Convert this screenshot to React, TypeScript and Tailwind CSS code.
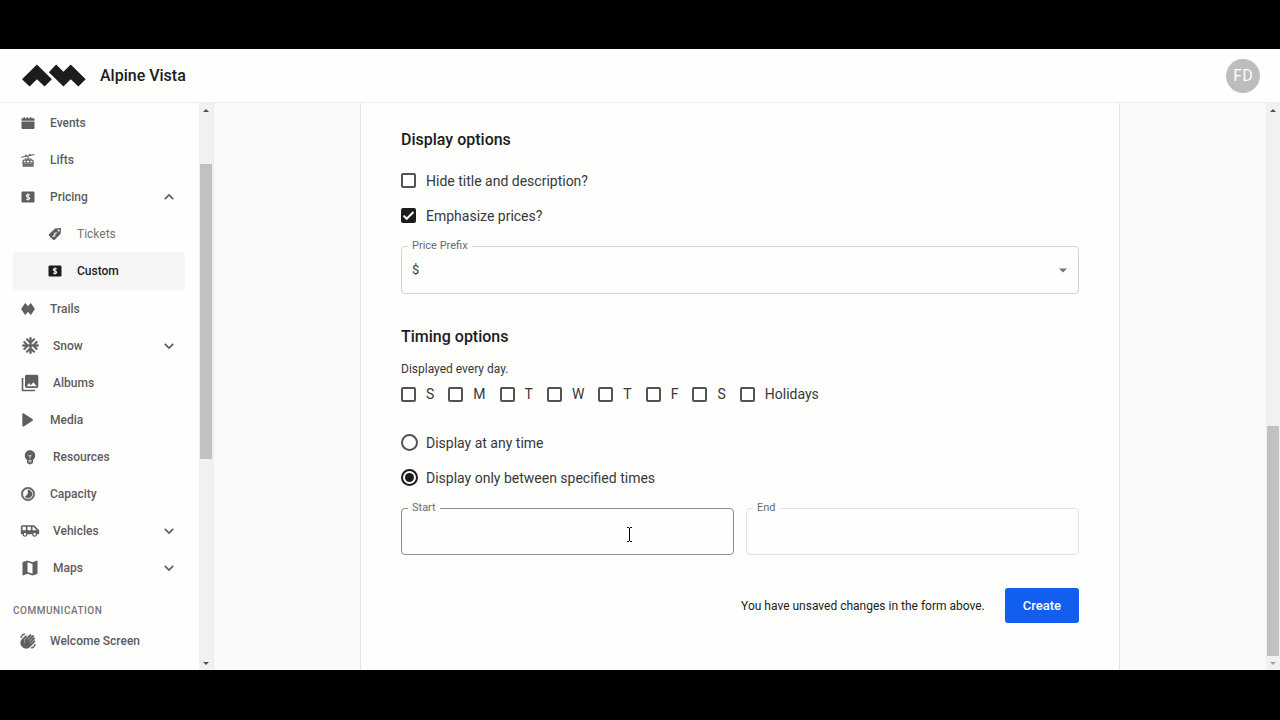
import { useState, type ReactNode } from "react";
import {
  MdAcUnit,
  MdAirportShuttle,
  MdEmojiObjects,
  MdMap,
  MdPhotoLibrary,
  MdTimelapse,
  MdWavingHand,
} from "react-icons/md";

function Logo() {
  return (
    <svg viewBox="65 73 193 68" className="h-[23px] w-16 shrink-0 fill-[#1b1c1e]" aria-hidden="true">
      <path d="M65 118 110 74 155 118 133 140 110 118 88 140Z" />
      <path d="M146 97 168 74 190 96 212 74 257 118 235 140 212 118 190 140Z" />
    </svg>
  );
}

function CalendarIcon() {
  return (
    <svg viewBox="0 0 14 14" className="size-[14px] fill-current">
      <path d="M.5 4.700V3.200a1 1 0 0 1 1-1h1V1.200h1.600v1h1.500v-1h1.600v1h1.600v-1h1.600v1h2.100a1 1 0 0 1 1 1v1.500ZM.5 5.500h13v6.500a1 1 0 0 1-1 1h-11a1 1 0 0 1-1-1Z" />
    </svg>
  );
}

function GondolaIcon() {
  return (
    <svg viewBox="0 0 14 14" className="size-[14px]" fill="none" stroke="currentColor">
      <path d="M.3 4.300 13.500 1.500M7.100 3v3.500" strokeWidth="1" />
      <circle cx="5" cy="2.500" r="0.900" fill="currentColor" stroke="none" />
      <circle cx="9" cy="1.600" r="0.900" fill="currentColor" stroke="none" />
      <path d="M3.500 6.200h7.200M1.400 9.900h11.400" strokeWidth="1.200" />
      <path d="M2.200 7.300h9.800v5.800H2.200ZM5.300 7.300v2.800M8.900 7.300v2.800" strokeWidth="1.100" />
      <path d="M2.200 11.700h9.800" strokeWidth="2" />
    </svg>
  );
}

function PriceIcon() {
  return (
    <svg viewBox="0 0 14 14" className="size-[14px]" fill="none">
      <rect x="0.500" y="1.500" width="13" height="11" rx="1.200" fill="currentColor" />
      <path
        d="M8.700 5.300C8.400 4.700 7.800 4.500 7 4.500c-1 0-1.700.4-1.700 1.200C5.300 7.400 8.700 6.600 8.700 8.300c0 .8-.7 1.200-1.700 1.200-.8 0-1.500-.3-1.700-.9M7 3.400v7.200"
        stroke="#fefefd"
        strokeWidth="1.100"
      />
    </svg>
  );
}

function TagIcon() {
  return (
    <svg viewBox="0 0 14 14" className="size-[14px]" fill="none">
      <path
        d="M7.400 1.600 12 .9c.7-.1 1.200.4 1.100 1.100l-.5 4.300a2 2 0 0 1-.6 1.200l-5 5.100a1.500 1.500 0 0 1-2.100 0L1.200 9a1.500 1.500 0 0 1 0-2.100l5-4.700a2 2 0 0 1 1.200-.6Z"
        fill="currentColor"
      />
      <circle cx="10.700" cy="3.400" r="1" fill="#fefefd" />
      <path
        d="M8.300 6.200c-.7-.5-1.400-.3-1.800.2-.9 1.200 1.200 1.600.3 2.700-.5.600-1.200.6-1.900 0M8.800 5.300 4.500 9.900"
        stroke="#fefefd"
        strokeWidth="0.900"
      />
    </svg>
  );
}

function TrailsIcon() {
  return (
    <svg viewBox="0 0 14 14" className="size-[14px] fill-current">
      <path d="M3.800 1.600c.3-.4.700-.4 1 0L7 4.300l2.200-2.700c.3-.4.700-.4 1 0l3.400 4.900c.2.300.2.700 0 1l-3.400 4.900c-.3.400-.7.400-1 0L7 9.700l-2.200 2.700c-.3.400-.7.400-1 0L.4 7.500a.9.900 0 0 1 0-1Z" />
    </svg>
  );
}

function PlayIcon() {
  return (
    <svg viewBox="0 0 14 14" className="size-[14px] fill-current">
      <path d="M1.300 1.300C1.300.4 2 0 2.800.5l8.700 5.600c.6.400.6 1.200 0 1.600l-8.700 5.700c-.8.500-1.500.1-1.500-.8Z" />
    </svg>
  );
}

function Chevron({ up = false }: { up?: boolean }) {
  return (
    <svg viewBox="0 0 12 12" className="size-3 shrink-0" fill="none" stroke="currentColor" strokeWidth="1.700">
      <path d={up ? "M1.800 8.200 6 4l4.200 4.200" : "M1.800 3.800 6 8l4.200-4.200"} />
    </svg>
  );
}

type NavItem = {
  label: string;
  icon: ReactNode;
  wide?: boolean;
  child?: boolean;
  active?: boolean;
  toggle?: "up" | "down";
};

// The icon set ships an invisible bounding path; it is hidden so that only the glyph gets the heavier stroke.
const boldIcon = "stroke-current stroke-[0.8] [&>path[fill=none]]:hidden";

const navItems: NavItem[] = [
  { label: "Events", icon: <CalendarIcon /> },
  { label: "Lifts", icon: <GondolaIcon /> },
  { label: "Pricing", icon: <PriceIcon />, toggle: "up" },
  { label: "Tickets", icon: <TagIcon />, child: true },
  { label: "Custom", icon: <PriceIcon />, child: true, active: true },
  { label: "Trails", icon: <TrailsIcon /> },
  { label: "Snow", icon: <MdAcUnit size={19} className={boldIcon} />, wide: true, toggle: "down" },
  { label: "Albums", icon: <MdPhotoLibrary size={20} />, wide: true },
  { label: "Media", icon: <PlayIcon /> },
  { label: "Resources", icon: <MdEmojiObjects size={18} />, wide: true },
  { label: "Capacity", icon: <MdTimelapse size={16} className={boldIcon} /> },
  { label: "Vehicles", icon: <MdAirportShuttle size={20} />, wide: true, toggle: "down" },
  { label: "Maps", icon: <MdMap size={20} />, wide: true, toggle: "down" },
];

function NavRow({ item }: { item: NavItem }) {
  const tone = item.active
    ? "h-[38px] bg-[#f5f5f5] text-[#1b1c1e] font-medium"
    : item.child
      ? "h-[37px] text-[#757575] font-normal"
      : "h-[37px] text-[#5c5c5e] font-medium";
  const indent = item.child ? "pl-[35px]" : "pl-2";
  const slot = item.wide ? "w-8" : "w-[29px]";
  const iconBox = item.wide ? "w-[18px]" : "w-[14px]";
  const content = (
    <>
      <span className={`flex shrink-0 ${slot}`}>
        <span className={`flex items-center justify-center ${iconBox} ${item.active ? "" : "text-[#5f5f61]"}`}>
          <span className="shrink-0">{item.icon}</span>
        </span>
      </span>
      <span className="flex-1 text-left">{item.label}</span>
      {item.toggle && <Chevron up={item.toggle === "up"} />}
    </>
  );
  const cls = `flex w-full items-center rounded-[3px] pr-[10px] text-xs ${indent} ${tone}`;
  return (
    <li>
      {item.toggle ? (
        <button type="button" aria-expanded={item.toggle === "up"} className={cls}>
          {content}
        </button>
      ) : (
        <a href="#" aria-current={item.active ? "page" : undefined} className={cls}>
          {content}
        </a>
      )}
    </li>
  );
}

function Scrollbar({ before, thumb, after, endTone }: { before: string; thumb: string; after: string; endTone: string }) {
  return (
    <div aria-hidden="true" className="flex w-[14px] shrink-0 flex-col bg-[#f1f1f3] px-px">
      <div className="flex h-[14px] items-center justify-center">
        <svg viewBox="0 0 6 3" className="h-[3px] w-[6px] fill-[#505050]"><path d="M0 3 3 0l3 3Z" /></svg>
      </div>
      <div className={`basis-0 ${before}`} />
      <div className={`basis-0 bg-[#c1c1c2] ${thumb}`} />
      <div className={`basis-0 ${after}`} />
      <div className="flex h-[14px] items-center justify-center">
        <svg viewBox="0 0 6 3" className={`h-[3px] w-[6px] ${endTone}`}><path d="M0 0h6L3 3Z" /></svg>
      </div>
    </div>
  );
}

function Check({ label, defaultChecked = false }: { label: string; defaultChecked?: boolean }) {
  return (
    <label className="flex items-center gap-[10px] text-sm text-[#37383b]">
      <span className="grid shrink-0">
        <input
          type="checkbox"
          defaultChecked={defaultChecked}
          className="peer col-start-1 row-start-1 size-[15px] appearance-none rounded-[2px] border-2 border-[#535355] checked:border-[#1b1c1e] checked:bg-[#1b1c1e]"
        />
        <svg
          viewBox="0 0 15 15"
          className="pointer-events-none invisible col-start-1 row-start-1 size-[15px] peer-checked:visible"
          fill="none"
          stroke="#fefefd"
          strokeWidth="2"
        >
          <path d="m2.500 7.600 3.200 3.200 6.800-6.800" />
        </svg>
      </span>
      {label}
    </label>
  );
}

function Radio({ label, checked, onSelect }: { label: string; checked: boolean; onSelect: () => void }) {
  return (
    <label className="flex h-[35px] items-center gap-2 text-sm text-[#37383b]">
      <span className="grid shrink-0 place-items-center">
        <input
          type="radio"
          name="display-time"
          checked={checked}
          onChange={onSelect}
          className="peer col-start-1 row-start-1 size-[17px] appearance-none rounded-full border-2 border-[#535355] checked:border-[#1b1c1e]"
        />
        <span className="pointer-events-none invisible col-start-1 row-start-1 size-[9px] rounded-full bg-[#1b1c1e] peer-checked:visible" />
      </span>
      {label}
    </label>
  );
}

function Field({ id, label, children }: { id: string; label: string; children: ReactNode }) {
  return (
    <div className="relative">
      {children}
      <label htmlFor={id} className="absolute -top-[6px] left-[7px] bg-[#fefefd] px-1 text-[11px] leading-3 text-[#6a6b6e]">
        {label}
      </label>
    </div>
  );
}

const days = ["S", "M", "T", "W", "T", "F", "S", "Holidays"];

export default function App() {
  const [limited, setLimited] = useState(true);

  return (
    <div className="flex h-screen flex-col bg-black pt-[49px] pb-[50px] font-[Roboto,sans-serif]">
      <header className="flex h-[54px] shrink-0 items-center border-b border-[#f0f0f1] bg-[#fefefd] pr-5 pl-[22px]">
        <Logo />
        <span className="ml-[14px] flex-1 text-base font-medium text-[#1b1c1e]">Alpine Vista</span>
        <button
          type="button"
          aria-label="Account"
          className="flex size-[34px] items-center justify-center rounded-full bg-[#bdbdbd] text-base text-[#fefefd]"
        >
          FD
        </button>
      </header>

      <div className="flex min-h-0 flex-1">
        <aside className="flex w-[214px] shrink-0 border-r border-[#ececee] bg-[#fefefd]">
          <nav className="flex-1 overflow-hidden pt-px pr-[14px] pl-[13px]">
            <ul>
              {navItems.map((item) => (
                <NavRow key={item.label} item={item} />
              ))}
            </ul>
            <h2 className="mt-[15px] text-[10px] leading-5 font-medium tracking-wider text-[#757577]">COMMUNICATION</h2>
            <ul className="mt-px">
              <NavRow item={{ label: "Welcome Screen", icon: <MdWavingHand size={16} className={boldIcon} /> }} />
            </ul>
          </nav>
          <Scrollbar before="grow-[47]" thumb="grow-[295]" after="grow-[197]" endTone="fill-[#505050]" />
        </aside>

        <main className="flex min-w-0 flex-1 justify-center overflow-hidden bg-[#fafafc]">
          <form
            onSubmit={(event) => event.preventDefault()}
            className="w-full max-w-[760px] border-x border-[#e4e4e7] bg-[#fefefd] px-10 pt-[25px] text-[#1b1c1e]"
          >
            <h2 className="text-base leading-6 font-medium">Display options</h2>
            <div className="mt-[11px] grid auto-rows-[35px] justify-start">
              <Check label="Hide title and description?" />
              <Check label="Emphasize prices?" defaultChecked />
            </div>
            <div className="mt-[13px]">
              <Field id="prefix" label="Price Prefix">
                <select
                  id="prefix"
                  className="block h-12 w-full appearance-none rounded-[4px] border border-[#d3d3d8] bg-transparent px-[10px] text-[13px] text-[#37383b]"
                >
                  <option>$</option>
                </select>
                <svg viewBox="0 0 8 4" className="pointer-events-none absolute top-[22px] right-3 h-[5px] w-2 fill-[#727274]">
                  <path d="M0 0h8L4 4Z" />
                </svg>
              </Field>
            </div>

            <h2 className="mt-[31px] text-base leading-6 font-medium">Timing options</h2>
            <p className="mt-[10px] text-xs leading-5 text-[#37383b]">Displayed every day.</p>
            <div className="flex h-[30px] items-center gap-[14px]">
              {days.map((day, index) => (
                <Check key={index} label={day} />
              ))}
            </div>

            <div className="mt-4">
              <Radio label="Display at any time" checked={!limited} onSelect={() => setLimited(false)} />
              <Radio label="Display only between specified times" checked={limited} onSelect={() => setLimited(true)} />
            </div>
            <div className="mt-[13px] grid grid-cols-2 gap-3">
              <Field id="start" label="Start">
                <input
                  id="start"
                  type="text"
                  className="block h-[47px] w-full rounded-[4px] border border-[#8c8c8e] bg-transparent px-[10px] text-[13px]"
                />
                <svg
                  viewBox="0 0 7 15"
                  className="pointer-events-none absolute top-[19px] right-[101px] h-[15px] w-[7px]"
                  fill="none"
                  stroke="#000"
                >
                  <path d="M1 .5h2M4 .5h2M3.500 1v13M1 14.500h2M4 14.500h2" />
                </svg>
              </Field>
              <Field id="end" label="End">
                <input
                  id="end"
                  type="text"
                  className="block h-[47px] w-full rounded-[4px] border border-[#e2e2e5] bg-transparent px-[10px] text-[13px]"
                />
              </Field>
            </div>

            <div className="mt-[33px] flex items-center justify-end gap-5">
              <p className="text-xs text-[#1b1c1e]">You have unsaved changes in the form above.</p>
              <button type="submit" className="h-[35px] rounded-[3px] bg-[#115eef] px-[18px] text-[13px] font-medium text-white">
                Create
              </button>
            </div>
          </form>
        </main>
        <Scrollbar before="grow-[309]" thumb="grow-[230]" after="grow-0" endTone="fill-[#a3a3a3]" />
      </div>
    </div>
  );
}
